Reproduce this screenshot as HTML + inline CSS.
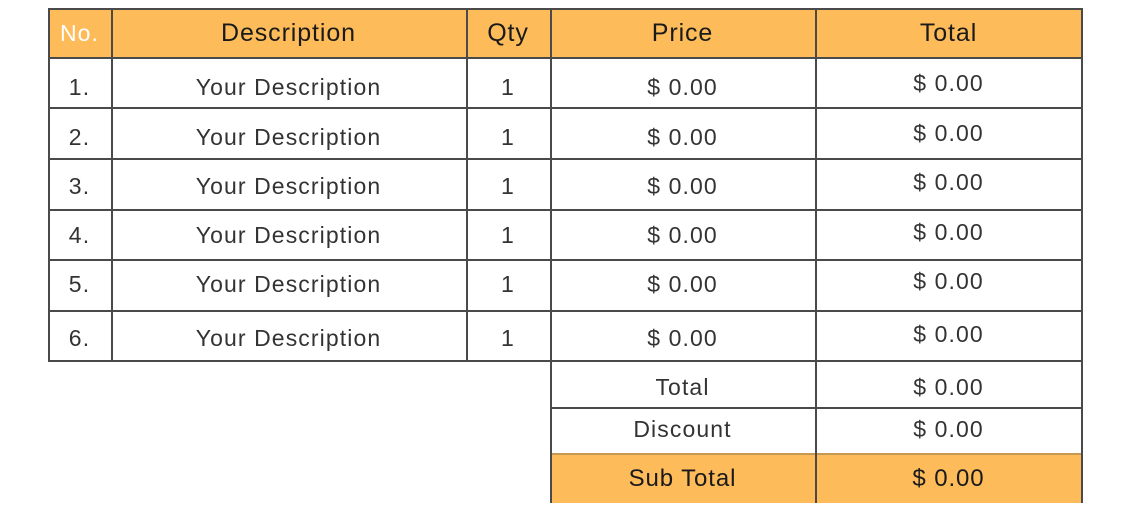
<!DOCTYPE html>
<html><head><meta charset="utf-8"><style>
body{margin:0;width:1131px;height:529px;background:#fff;position:relative;overflow:hidden;font-family:"Liberation Sans",sans-serif;}
.bg{position:absolute;background:#FDBB5A;}
.h{position:absolute;height:1.5px;background:#4a4a4a;}
.v{position:absolute;width:1.5px;background:#4a4a4a;}
.t{position:absolute;text-align:center;font-size:23px;color:#333;letter-spacing:1.1px;line-height:26px;}
.hd{color:#1a1a1a;font-size:25px;letter-spacing:0.9px;}
</style></head><body>
<div class="bg" style="left:48px;top:8px;width:1034px;height:49px"></div>
<div class="bg" style="left:550px;top:453px;width:532px;height:50px"></div>

<div class="h" style="left:48px;top:8px;width:1034px"></div>
<div class="h" style="left:48px;top:57px;width:1034px"></div>
<div class="h" style="left:48px;top:107px;width:1034px"></div>
<div class="h" style="left:48px;top:158px;width:1034px"></div>
<div class="h" style="left:48px;top:209px;width:1034px"></div>
<div class="h" style="left:48px;top:259px;width:1034px"></div>
<div class="h" style="left:48px;top:310px;width:1034px"></div>
<div class="h" style="left:48px;top:360px;width:1034px"></div>
<div class="h" style="left:550px;top:407px;width:532px"></div>
<div class="h" style="left:550px;top:453px;width:532px;opacity:0.3"></div>

<div class="v" style="left:48px;top:8px;height:353px"></div>
<div class="v" style="left:111px;top:8px;height:353px"></div>
<div class="v" style="left:466px;top:8px;height:353px"></div>
<div class="v" style="left:550px;top:8px;height:495px"></div>
<div class="v" style="left:815px;top:8px;height:495px"></div>
<div class="v" style="left:1081px;top:8px;height:495px"></div>

<div class="t" style="left:48px;top:20px;width:63px;color:#fff;font-size:23px">No.</div>
<div class="t hd" style="left:111px;top:20px;width:355px">Description</div>
<div class="t hd" style="left:466px;top:20px;width:84px">Qty</div>
<div class="t hd" style="left:550px;top:20px;width:265px">Price</div>
<div class="t hd" style="left:815px;top:20px;width:267px">Total</div>

<div class="t" style="left:48px;top:74px;width:63px">1.</div>
<div class="t" style="left:111px;top:74px;width:355px">Your Description</div>
<div class="t" style="left:466px;top:74px;width:84px">1</div>
<div class="t" style="left:550px;top:74px;width:265px">$ 0.00</div>
<div class="t" style="left:815px;top:70px;width:267px">$ 0.00</div>

<div class="t" style="left:48px;top:124px;width:63px">2.</div>
<div class="t" style="left:111px;top:124px;width:355px">Your Description</div>
<div class="t" style="left:466px;top:124px;width:84px">1</div>
<div class="t" style="left:550px;top:124px;width:265px">$ 0.00</div>
<div class="t" style="left:815px;top:120px;width:267px">$ 0.00</div>

<div class="t" style="left:48px;top:173px;width:63px">3.</div>
<div class="t" style="left:111px;top:173px;width:355px">Your Description</div>
<div class="t" style="left:466px;top:173px;width:84px">1</div>
<div class="t" style="left:550px;top:173px;width:265px">$ 0.00</div>
<div class="t" style="left:815px;top:169px;width:267px">$ 0.00</div>

<div class="t" style="left:48px;top:222px;width:63px">4.</div>
<div class="t" style="left:111px;top:222px;width:355px">Your Description</div>
<div class="t" style="left:466px;top:222px;width:84px">1</div>
<div class="t" style="left:550px;top:222px;width:265px">$ 0.00</div>
<div class="t" style="left:815px;top:219px;width:267px">$ 0.00</div>

<div class="t" style="left:48px;top:271px;width:63px">5.</div>
<div class="t" style="left:111px;top:271px;width:355px">Your Description</div>
<div class="t" style="left:466px;top:271px;width:84px">1</div>
<div class="t" style="left:550px;top:271px;width:265px">$ 0.00</div>
<div class="t" style="left:815px;top:268px;width:267px">$ 0.00</div>

<div class="t" style="left:48px;top:325px;width:63px">6.</div>
<div class="t" style="left:111px;top:325px;width:355px">Your Description</div>
<div class="t" style="left:466px;top:325px;width:84px">1</div>
<div class="t" style="left:550px;top:325px;width:265px">$ 0.00</div>
<div class="t" style="left:815px;top:321px;width:267px">$ 0.00</div>

<div class="t" style="left:550px;top:374px;width:265px">Total</div>
<div class="t" style="left:815px;top:374px;width:267px">$ 0.00</div>
<div class="t" style="left:550px;top:416px;width:265px">Discount</div>
<div class="t" style="left:815px;top:416px;width:267px">$ 0.00</div>
<div class="t hd" style="left:550px;top:466px;width:265px;font-size:24px">Sub Total</div>
<div class="t hd" style="left:815px;top:466px;width:267px;font-size:24px">$ 0.00</div>
</body></html>
